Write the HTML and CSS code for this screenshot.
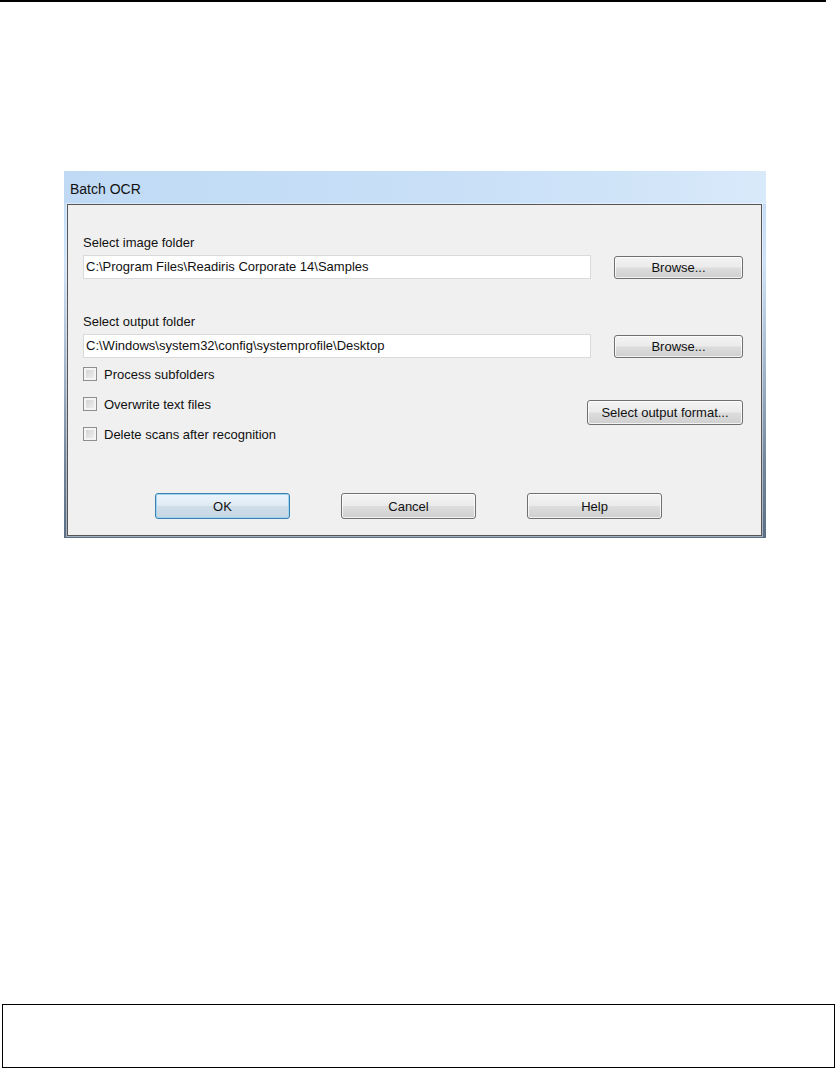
FILE: index.html
```html
<!DOCTYPE html>
<html lang="en">
<head>
  <meta charset="UTF-8" />
  <title>Batch OCR</title>
  <link rel="stylesheet" href="styles.css">
</head>
<body>
  <div class="top-rule"></div>

  <div class="window">
    <div class="window-title">Batch OCR</div>
    <div class="panel">
      <div class="label">Select image folder</div>
      <div class="field-row">
        <div class="textbox">C:\Program Files\Readiris Corporate 14\Samples</div>
        <button class="btn btn-browse">Browse...</button>
      </div>

      <div class="label label-second">Select output folder</div>
      <div class="field-row">
        <div class="textbox">C:\Windows\system32\config\systemprofile\Desktop</div>
        <button class="btn btn-browse">Browse...</button>
      </div>

      <div class="options">
        <div class="checks">
          <label class="check"><span class="box"></span>Process subfolders</label>
          <label class="check"><span class="box"></span>Overwrite text files</label>
          <label class="check"><span class="box"></span>Delete scans after recognition</label>
        </div>
        <button class="btn btn-format">Select output format...</button>
      </div>

      <div class="actions">
        <button class="btn btn-action btn-default">OK</button>
        <button class="btn btn-action">Cancel</button>
        <button class="btn btn-action">Help</button>
      </div>
    </div>
  </div>

  <div class="footer-box"></div>
</body>
</html>
```

FILE: styles.css
```css
body {
  margin: 0;
  padding: 0;
  background: #fff;
  font-family: 'Liberation Sans', Arial, sans-serif;
  color: #000;
}
.top-rule {
  width: 826px;
  height: 2px;
  background: #000;
}
.window {
  margin: 169px 0 0 64px;
  width: 702px;
  box-sizing: border-box;
  padding: 0 4px 2px 3px;
  background: linear-gradient(180deg, #c2daf5 0%, #cde2f8 25%, #c6d8ec 32%, #9fb3c9 55%, #71859b 80%, #5b6f86 100%);
}
.window-title {
  height: 29px;
  margin: 0 -4px 0 -3px;
  padding: 4px 0 0 6px;
  line-height: 29px;
  font-size: 14px;
  color: #111;
  background: linear-gradient(90deg, #c0daf5, #c9e0f7 60%, #d8e9fa);
}
.panel {
  background: #f0f0f0;
  border: 1px solid #555;
  box-shadow: 0 0 0 1px rgba(255, 255, 255, 0.45);
  padding: 30px 18px 16px 15px;
}
.label {
  font-size: 13px;
  line-height: 16px;
  height: 16px;
  margin-bottom: 4px;
  color: #111;
}
.label-second {
  margin-top: 35px;
}
.field-row {
  display: flex;
  justify-content: space-between;
  align-items: center;
}
.textbox {
  width: 508px;
  height: 24px;
  box-sizing: border-box;
  background: #fff;
  border: 1px solid #dadada;
  padding-left: 2px;
  font-size: 13px;
  line-height: 22px;
  color: #111;
  white-space: nowrap;
}
.btn {
  font-family: 'Liberation Sans', Arial, sans-serif;
  font-size: 13px;
  color: #111;
  height: 23px;
  padding: 0;
  border: 1px solid #707070;
  border-radius: 3px;
  background: linear-gradient(180deg, #f3f3f3 0%, #ebebeb 48%, #dddddd 52%, #cfcfcf 100%);
  box-shadow: inset 0 0 0 1px rgba(255, 255, 255, 0.75);
}
.btn-browse {
  width: 129px;
}
.options {
  display: flex;
  justify-content: space-between;
  align-items: flex-start;
  margin-top: 9px;
}
.checks {
  display: flex;
  flex-direction: column;
  gap: 16px;
}
.check {
  display: flex;
  align-items: center;
  height: 14px;
  font-size: 13px;
  color: #111;
}
.box {
  width: 12px;
  height: 12px;
  margin-right: 7px;
  border: 1px solid #8f8f8f;
  background: linear-gradient(135deg, #cfcfcf, #f2f2f2);
  box-shadow: inset 0 0 0 2px #f4f4f4;
}
.btn-format {
  width: 156px;
  height: 25px;
  margin-top: 33px;
}
.actions {
  display: flex;
  gap: 51px;
  margin: 52px 0 0 72px;
}
.btn-action {
  width: 135px;
  height: 26px;
}
.btn-default {
  border-color: #3c7fb1;
  background: linear-gradient(180deg, #ebf4fb 0%, #dfebf4 48%, #d0dee9 52%, #c5d6e3 100%);
  box-shadow: inset 0 0 0 1px #9fd5f1;
}
.footer-box {
  margin: 466px 0 0 2px;
  width: 833px;
  height: 64px;
  box-sizing: border-box;
  border: 1px solid #000;
}
```
